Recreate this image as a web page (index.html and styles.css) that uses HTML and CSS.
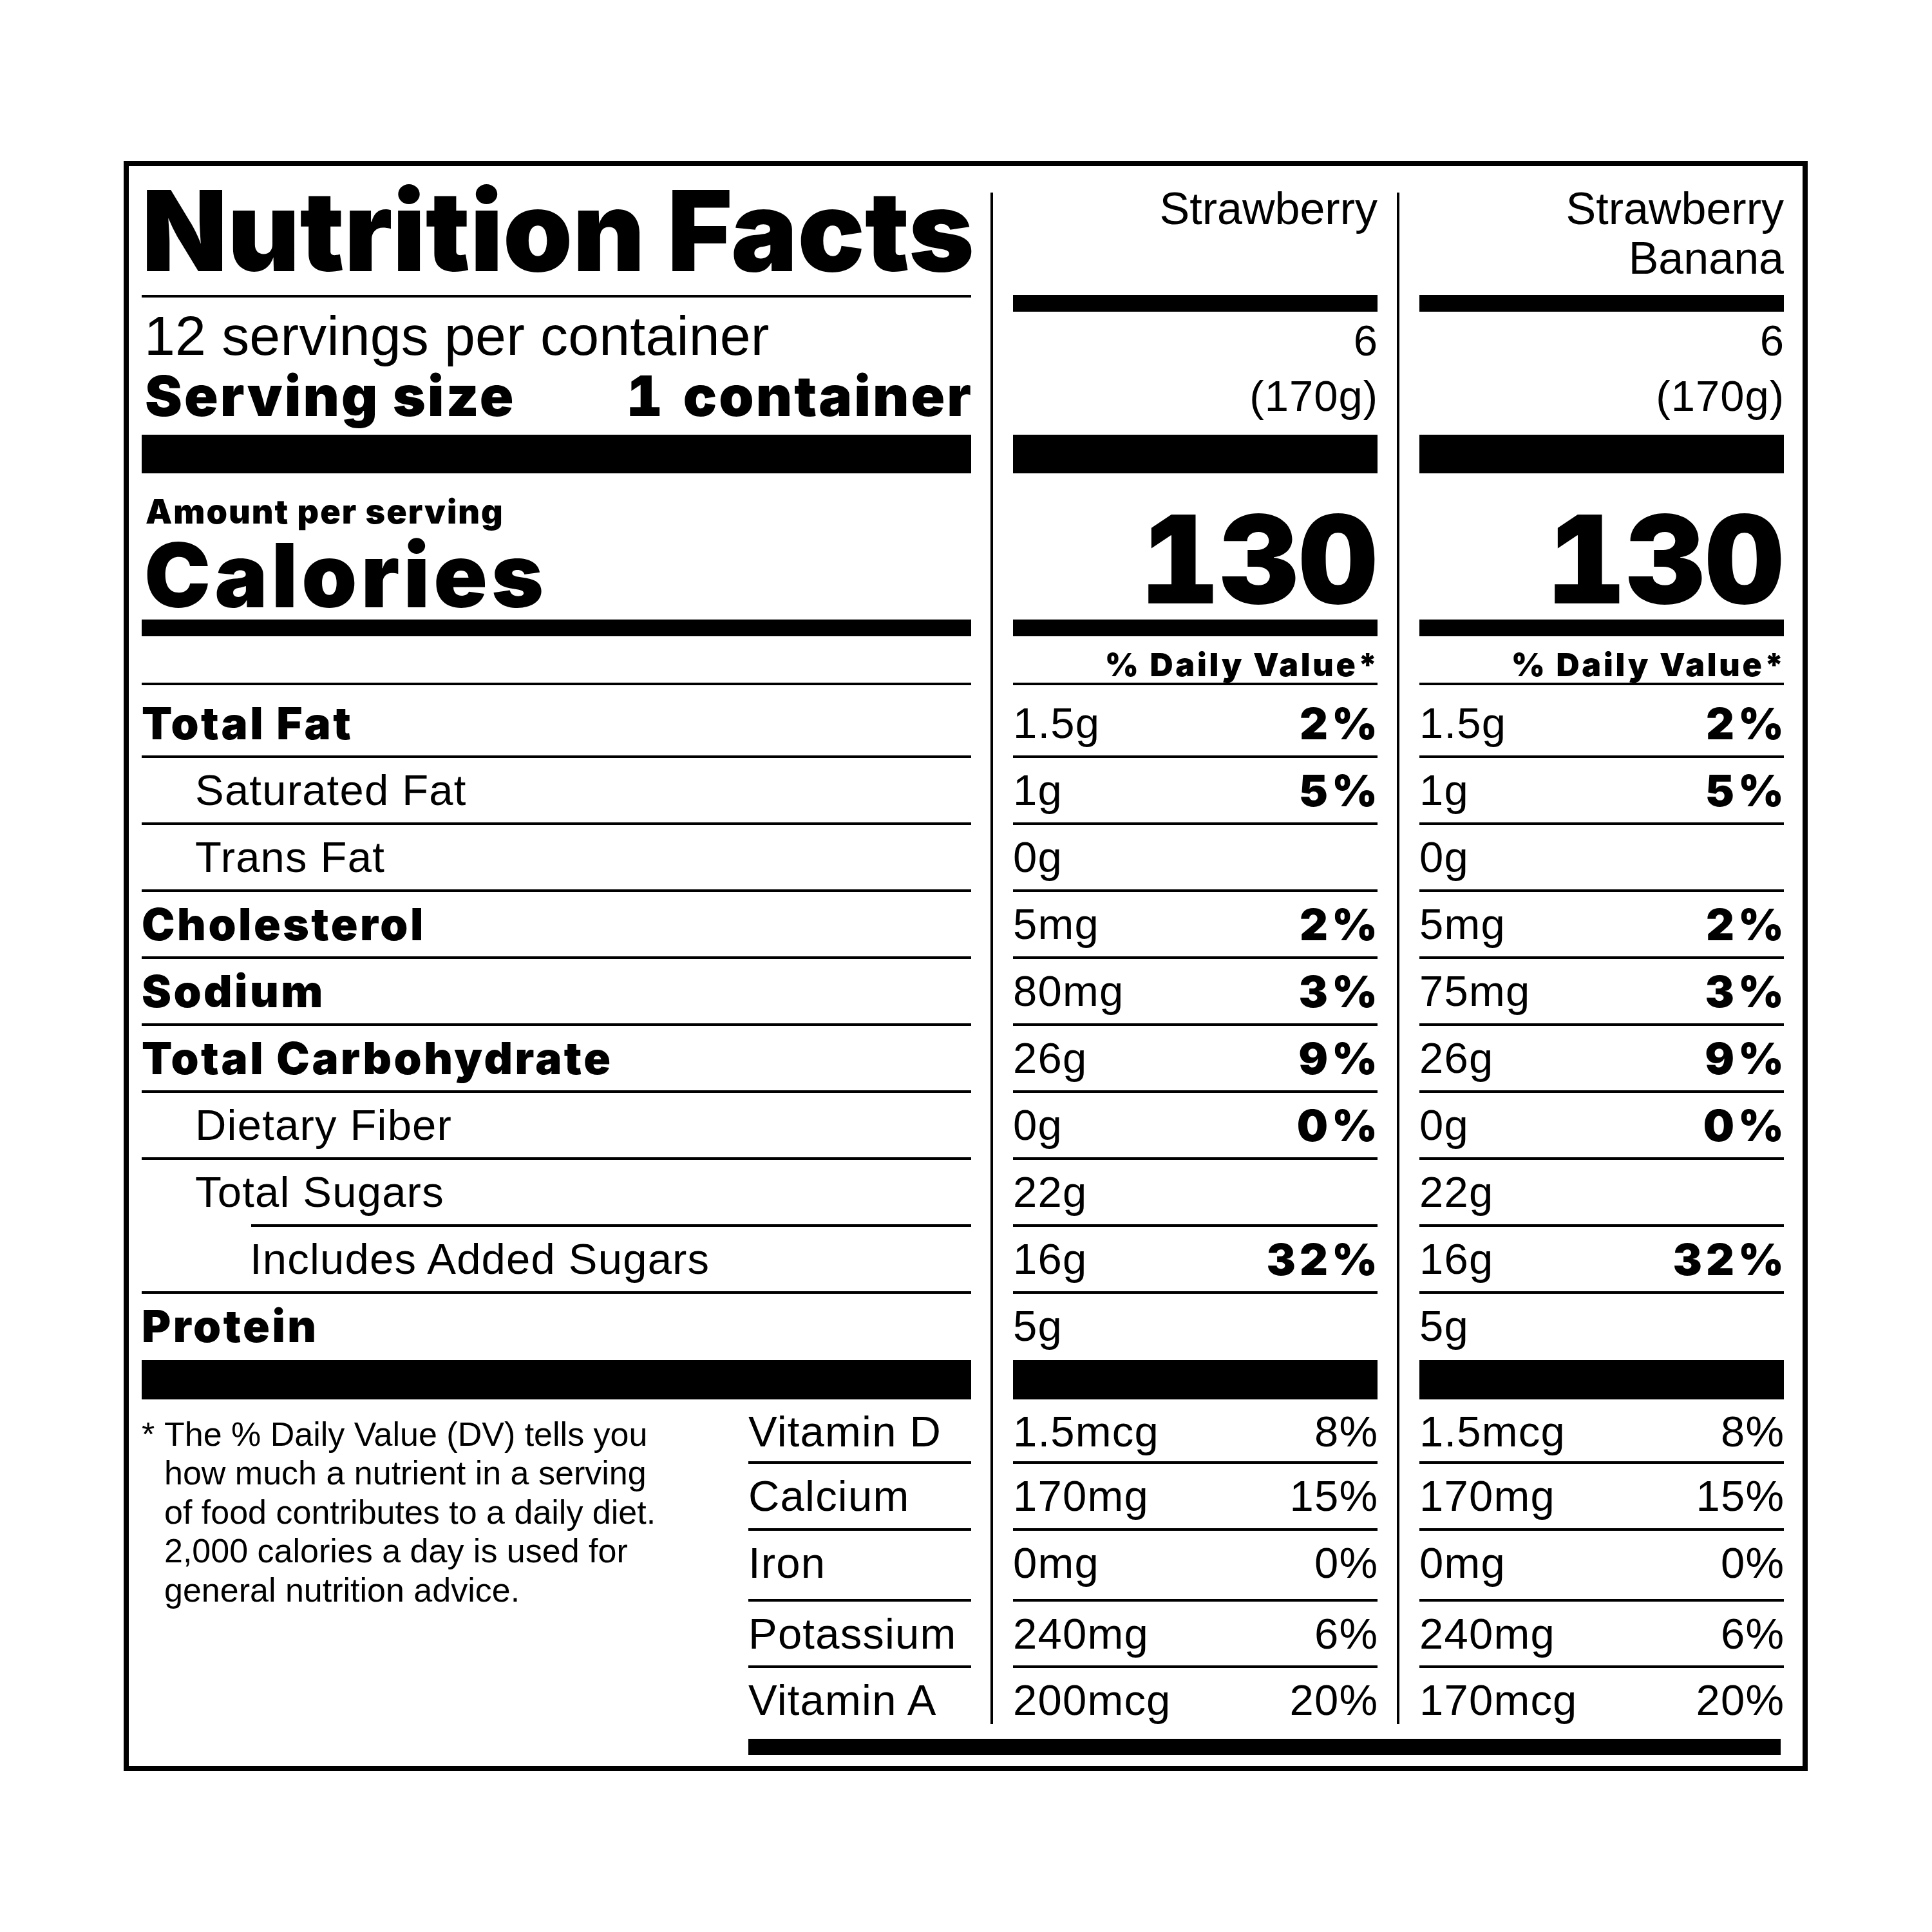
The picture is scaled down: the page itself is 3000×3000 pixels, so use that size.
FILE: index.html
```html
<!DOCTYPE html>
<html lang="en">
<head>
<meta charset="utf-8">
<title>Nutrition Facts</title>
<link rel="stylesheet" href="styles.css">
</head>
<body>
<section class="label">
  <div class="cols">
    <div class="col col-left">
      <div class="blk-hdr"><h1 class="title">Nutrition Facts</h1></div>
      <div class="blk-sep"></div>
      <div class="blk-serv">
        <p class="servings">12 servings per container</p>
        <p class="size"><span>Serving size</span><span class="cont">1 container</span></p>
      </div>
      <div class="bar-xl"></div>
      <div class="blk-cal">
        <p class="amount">Amount per serving</p>
        <p class="calories">Calories</p>
      </div>
      <div class="bar-m"></div>
      <div class="blk-dv"></div>
      <div class="row first"><span class="lb">Total Fat</span></div>
      <div class="row"><span class="ind1">Saturated Fat</span></div>
      <div class="row"><span class="ind1">Trans Fat</span></div>
      <div class="row"><span class="lb">Cholesterol</span></div>
      <div class="row"><span class="lb">Sodium</span></div>
      <div class="row"><span class="lb">Total Carbohydrate</span></div>
      <div class="row"><span class="ind1">Dietary Fiber</span></div>
      <div class="row sugars-l"><span class="ind1">Total Sugars</span></div>
      <div class="row"><span class="ind2">Includes Added Sugars</span></div>
      <div class="row last"><span class="lb">Protein</span></div>
      <div class="bar-xl b2"></div>
      <div class="bottom">
        <p class="footnote"><span class="ast">*</span><span class="fn-text">The % Daily Value (DV) tells you<br>how much a nutrient in a serving<br>of food contributes to a daily diet.<br>2,000 calories a day is used for<br>general nutrition advice.</span></p>
        <div class="vnames">
          <div class="vrow v1">Vitamin D</div>
          <div class="vrow v2">Calcium</div>
          <div class="vrow v3">Iron</div>
          <div class="vrow v4">Potassium</div>
          <div class="vrow v5">Vitamin A</div>
        </div>
      </div>
    </div>

    <div class="col col-val">
      <div class="blk-hdr"><p class="prod">Strawberry</p></div>
      <div class="blk-sep"></div>
      <div class="blk-serv"><p class="vserv">6<br>(170g)</p></div>
      <div class="bar-xl"></div>
      <div class="blk-cal"><p class="cal-num">130</p></div>
      <div class="bar-m"></div>
      <div class="blk-dv"><span class="dvh">% Daily Value*</span></div>
      <div class="row first"><span>1.5g</span><span class="pb">2%</span></div>
      <div class="row"><span>1g</span><span class="pb">5%</span></div>
      <div class="row"><span>0g</span></div>
      <div class="row"><span>5mg</span><span class="pb">2%</span></div>
      <div class="row"><span>80mg</span><span class="pb">3%</span></div>
      <div class="row"><span>26g</span><span class="pb">9%</span></div>
      <div class="row"><span>0g</span><span class="pb">0%</span></div>
      <div class="row"><span>22g</span></div>
      <div class="row"><span>16g</span><span class="pb">32%</span></div>
      <div class="row last"><span>5g</span></div>
      <div class="bar-xl b2"></div>
      <div class="vrow v1"><span>1.5mcg</span><span>8%</span></div>
      <div class="vrow v2"><span>170mg</span><span>15%</span></div>
      <div class="vrow v3"><span>0mg</span><span>0%</span></div>
      <div class="vrow v4"><span>240mg</span><span>6%</span></div>
      <div class="vrow v5"><span>200mcg</span><span>20%</span></div>
    </div>

    <div class="col col-val">
      <div class="blk-hdr"><p class="prod">Strawberry<br>Banana</p></div>
      <div class="blk-sep"></div>
      <div class="blk-serv"><p class="vserv">6<br>(170g)</p></div>
      <div class="bar-xl"></div>
      <div class="blk-cal"><p class="cal-num">130</p></div>
      <div class="bar-m"></div>
      <div class="blk-dv"><span class="dvh">% Daily Value*</span></div>
      <div class="row first"><span>1.5g</span><span class="pb">2%</span></div>
      <div class="row"><span>1g</span><span class="pb">5%</span></div>
      <div class="row"><span>0g</span></div>
      <div class="row"><span>5mg</span><span class="pb">2%</span></div>
      <div class="row"><span>75mg</span><span class="pb">3%</span></div>
      <div class="row"><span>26g</span><span class="pb">9%</span></div>
      <div class="row"><span>0g</span><span class="pb">0%</span></div>
      <div class="row"><span>22g</span></div>
      <div class="row"><span>16g</span><span class="pb">32%</span></div>
      <div class="row last"><span>5g</span></div>
      <div class="bar-xl b2"></div>
      <div class="vrow v1"><span>1.5mcg</span><span>8%</span></div>
      <div class="vrow v2"><span>170mg</span><span>15%</span></div>
      <div class="vrow v3"><span>0mg</span><span>0%</span></div>
      <div class="vrow v4"><span>240mg</span><span>6%</span></div>
      <div class="vrow v5"><span>170mcg</span><span>20%</span></div>
    </div>
  </div>
  <div class="bottom-bar"></div>
</section>
</body>
</html>
```

FILE: styles.css
```css
* { box-sizing: border-box; margin: 0; padding: 0; }
html, body { background: #fff; }
body {
  color: #000;
  font-family: "Liberation Sans", Arial, Helvetica, sans-serif;
  font-size: 67px;
  line-height: 1;
}

/* label */
.label {
  margin: 250px 0 0 192px;
  width: 2615px;
  border: 8px solid #000;
  padding: 41px 29px 17px 20px;
}
.cols { display: flex; }
.col { flex: none; }
.col-left { width: 1288px; }
.col-val {
  width: 601px;
  margin-left: 30px;
  border-left: 4px solid #000;
  padding-left: 31px;
}

.blk-hdr, .blk-serv, .blk-cal { display: flow-root; }
.blk-hdr { height: 159px; }
.blk-sep { height: 26px; }
.col-left .blk-sep { border-top: 4px solid #000; }
.col-val .blk-sep { background: #000; }
.blk-serv { height: 191px; }
.bar-xl { height: 60px; background: #000; }
.bar-xl.b2 { height: 61px; }
.blk-cal { height: 227px; }
.bar-m { height: 26px; background: #000; }
.blk-dv {
  height: 76px;
  border-bottom: 4px solid #000;
  padding-top: 3px;
  line-height: 72px;
  text-align: right;
}

/* heavy type */
.title, .size, .amount, .calories, .cal-num, .dvh, .lb, .pb {
  font-family: "Inter", "Liberation Sans", Arial, sans-serif;
  font-weight: 900;
}
.title {
  font-size: 173px;
  line-height: 140px;
  margin-top: -11px;
  white-space: nowrap;
}
.servings {
  font-size: 86px;
  line-height: 96px;
  margin-top: -11px;
  padding-left: 4px;
  letter-spacing: 0.2px;
}
.size {
  font-size: 87px;
  line-height: 96px;
  margin-top: -2px;
  display: flex;
  justify-content: space-between;
  padding-left: 5px;
  letter-spacing: 3px;
  margin-right: -3px;
}
.cont {
  font-variant-numeric: tabular-nums;
  word-spacing: 3px;
}
.amount {
  font-size: 52px;
  line-height: 60px;
  margin-top: 30px;
  padding-left: 6px;
  letter-spacing: 2px;
}
.calories {
  font-size: 138px;
  line-height: 120px;
  margin-top: 8px;
  padding-left: 4px;
  letter-spacing: 6px;
}

.prod {
  font-size: 70px;
  line-height: 77px;
  margin-top: -13px;
  text-align: right;
}
.vserv {
  font-size: 67px;
  line-height: 86px;
  margin-top: 2px;
  text-align: right;
  letter-spacing: 1px;
  margin-right: -1px;
}
.cal-num {
  font-size: 190px;
  line-height: 190px;
  margin-top: 38px;
  text-align: right;
  font-variant-numeric: tabular-nums;
  letter-spacing: 0.5px;
  margin-right: -0.5px;
}
.dvh {
  font-size: 50px;
  letter-spacing: 3.75px;
  margin-right: -3.75px;
}

.row {
  height: 104px;
  border-bottom: 4px solid #000;
  display: flex;
  justify-content: space-between;
  line-height: 100px;
  white-space: nowrap;
  letter-spacing: 1.2px;
}
.row.first { height: 113px; padding-top: 9px; }
.row.last { height: 103px; border-bottom: 0; }
.row.sugars-l {
  border-bottom: 0;
  background: linear-gradient(#000, #000) right bottom / calc(100% - 170px) 4px no-repeat;
}
.lb {
  font-size: 69px;
  letter-spacing: 3.5px;
}
.pb {
  font-size: 68px;
  letter-spacing: 6px;
  margin-right: -6px;
}
.ind1 { padding-left: 83px; }
.ind2 { padding-left: 168px; }

/* bottom section */
.bottom { display: flex; }
.footnote {
  flex: 1;
  display: flex;
  font-size: 52px;
  line-height: 60.4px;
  padding-top: 24px;
  white-space: nowrap;
}
.ast { width: 35px; flex: none; }
.vnames { width: 346px; flex: none; }
.vrow {
  display: flex;
  justify-content: space-between;
  line-height: 100px;
  border-bottom: 4px solid #000;
  white-space: nowrap;
  letter-spacing: 1.2px;
}
.vrow span:last-child { margin-right: -1.2px; }
.v1 { height: 100px; }
.v2 { height: 104px; }
.v3 { height: 110px; }
.v4 { height: 103px; }
.v5 { height: 87px; border-bottom: 0; }

.bottom-bar {
  margin: 23px 0 0 942px;
  width: 1603px;
  height: 25px;
  background: #000;
}
```
